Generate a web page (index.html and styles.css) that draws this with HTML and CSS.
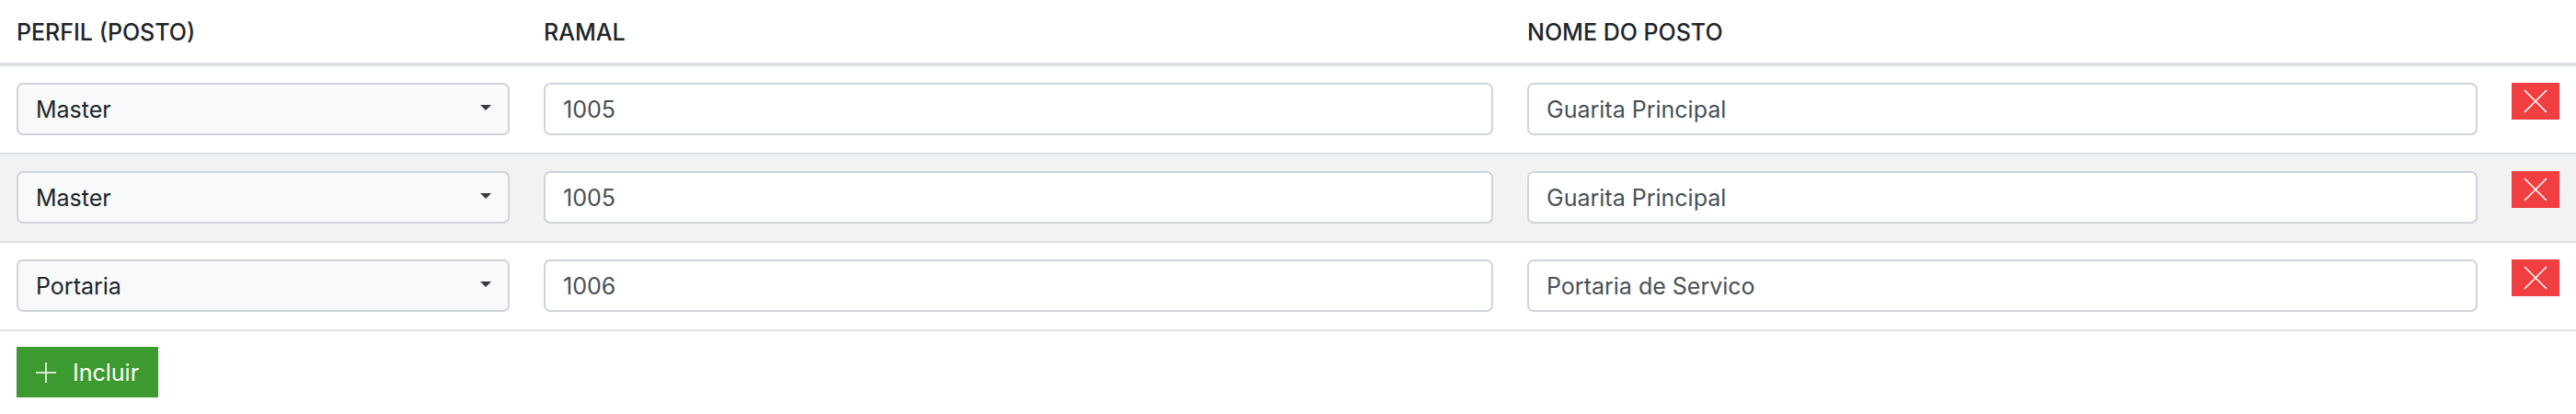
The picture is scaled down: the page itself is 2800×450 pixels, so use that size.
FILE: index.html
```html
<!DOCTYPE html>
<html lang="pt-BR">
<head>
    <meta charset="UTF-8">
    <meta name="viewport" content="width=device-width, initial-scale=1.0">
    <title>Postos</title>
    <link rel="stylesheet" href="styles.css">
</head>
<body>
    <div class="postos">
        <div class="postos-head">
            <div class="head-cell">PERFIL (POSTO)</div>
            <div class="head-cell">RAMAL</div>
            <div class="head-cell">NOME DO POSTO</div>
            <div class="head-cell"></div>
        </div>

        <div class="posto-row">
            <div class="select-wrap">
                <select class="field field-select">
                    <option selected>Master</option>
                    <option>Portaria</option>
                </select>
            </div>
            <input class="field" type="text" value="1005">
            <input class="field" type="text" value="Guarita Principal">
            <button class="btn-remove" title="Remover">
                <svg width="26" height="26" viewBox="0 0 26 26"><path d="M1 1 L25 25 M25 1 L1 25" stroke="#fff" stroke-width="1.6" fill="none"/></svg>
            </button>
        </div>

        <div class="posto-row striped">
            <div class="select-wrap">
                <select class="field field-select">
                    <option selected>Master</option>
                    <option>Portaria</option>
                </select>
            </div>
            <input class="field" type="text" value="1005">
            <input class="field" type="text" value="Guarita Principal">
            <button class="btn-remove" title="Remover">
                <svg width="26" height="26" viewBox="0 0 26 26"><path d="M1 1 L25 25 M25 1 L1 25" stroke="#fff" stroke-width="1.6" fill="none"/></svg>
            </button>
        </div>

        <div class="posto-row">
            <div class="select-wrap">
                <select class="field field-select">
                    <option>Master</option>
                    <option selected>Portaria</option>
                </select>
            </div>
            <input class="field" type="text" value="1006">
            <input class="field" type="text" value="Portaria de Servico">
            <button class="btn-remove" title="Remover">
                <svg width="26" height="26" viewBox="0 0 26 26"><path d="M1 1 L25 25 M25 1 L1 25" stroke="#fff" stroke-width="1.6" fill="none"/></svg>
            </button>
        </div>

        <div class="postos-foot">
            <button class="btn-add">
                <svg width="24" height="24" viewBox="0 0 24 24"><path d="M12 1 V23 M1 12 H23" stroke="#fff" stroke-width="1.6" fill="none"/></svg>
                <span>Incluir</span>
            </button>
        </div>
    </div>
</body>
</html>
```

FILE: styles.css
```css
* { margin: 0; padding: 0; box-sizing: border-box; }
body {
    background: #fff;
    color: #212529;
    font-family: 'Inter', 'Open Sans', sans-serif;
    font-size: 25px;
}
.postos-head,
.posto-row {
    display: grid;
    grid-template-columns: 536px 1032px 1033px 52px;
    column-gap: 37px;
    padding: 0 18px;
}
.postos-head {
    height: 72px;
    align-items: center;
    padding-top: 2px;
    border-bottom: 4px solid #dee2e6;
}
.head-cell {
    font-weight: 500;
    color: #212529;
}
.posto-row {
    height: 96px;
    padding-top: 18px;
    align-items: start;
    border-bottom: 2px solid #dee2e6;
}
.striped { background: #f2f2f2; }
.field {
    width: 100%;
    height: 57px;
    padding: 0 19px;
    border: 2px solid #ced4da;
    border-radius: 7px;
    background: #fff;
    color: #495057;
    font: inherit;
    outline: none;
}
.select-wrap { position: relative; }
.field-select {
    appearance: none;
    -webkit-appearance: none;
    background: #f8f9fa;
    color: #212529;
}
.select-wrap::after {
    content: '';
    position: absolute;
    right: 20px;
    top: 24px;
    border-left: 6px solid transparent;
    border-right: 6px solid transparent;
    border-top: 6px solid #343a40;
}
.btn-remove {
    width: 52px;
    height: 40px;
    border: none;
    background: #f13e40;
    display: flex;
    align-items: center;
    justify-content: center;
    cursor: pointer;
}
.postos-foot { padding: 17px 18px; }
.btn-add {
    display: inline-flex;
    align-items: center;
    gap: 17px;
    width: 154px;
    height: 55px;
    padding: 0 20px;
    border: none;
    background: #3c9a31;
    color: #fff;
    font: inherit;
    cursor: pointer;
}
```
